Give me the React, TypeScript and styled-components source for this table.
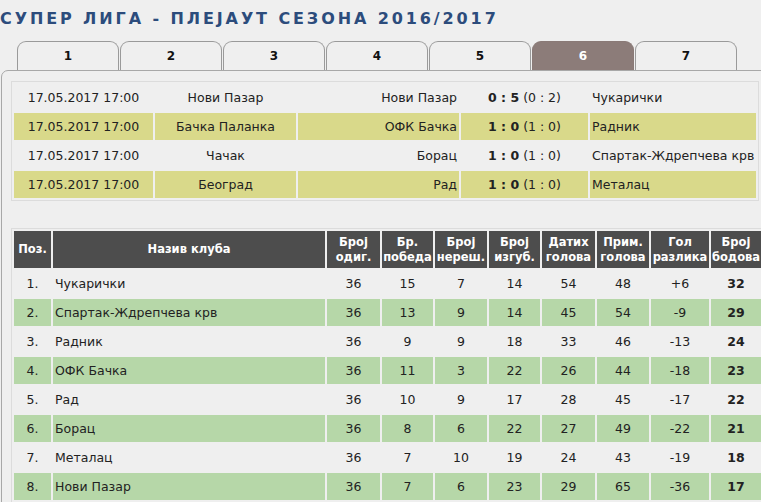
import React from "react";
import styled, { createGlobalStyle } from "styled-components";

const Global = createGlobalStyle`
  html, body { margin: 0; padding: 0; background: #efefef; overflow: hidden; }
  body { font-family: "DejaVu Sans", Tahoma, sans-serif; color: #222; }
`;

const Page = styled.div`
  width: 790px;
  padding-top: 8px;
`;

const Title = styled.h1`
  margin: 0;
  font-size: 16px;
  line-height: 21px;
  font-weight: bold;
  letter-spacing: 2.9px;
  color: #2c4c7c;
  white-space: nowrap;
`;

const TabBar = styled.div`
  display: flex;
  gap: 1px;
  padding-left: 17px;
  margin-top: 12px;
`;

const Tab = styled.div<{ $active?: boolean }>`
  box-sizing: border-box;
  width: 102px;
  height: 29px;
  border: 1px solid ${(p) => (p.$active ? "#8a7a77" : "#9a9a9a")};
  border-bottom: none;
  border-radius: 9px 9px 0 0;
  background: ${(p) => (p.$active ? "#8c7c79" : "#efefef")};
  color: ${(p) => (p.$active ? "#fff" : "#111")};
  font-weight: bold;
  font-size: 12px;
  display: flex;
  align-items: center;
  justify-content: center;
`;

const Panel = styled.div`
  border: 1px solid #a8a8a8;
  border-radius: 7px 0 0 0;
  margin-left: 1px;
  padding: 10px 0 0 9px;
  height: 500px;
`;

const MatchTable = styled.table`
  border-collapse: separate;
  border-spacing: 2px;
  border: 1px solid #dcdcdc;
  font-size: 12.5px;
  table-layout: fixed;
`;

const MatchRow = styled.tr<{ $alt?: boolean }>`
  td {
    background: ${(p) => (p.$alt ? "#d9d98a" : "transparent")};
  }
`;

const MCell = styled.td<{ $align?: string; $w: number }>`
  width: ${(p) => p.$w}px;
  height: 27px;
  padding: 0 2px;
  box-sizing: border-box;
  text-align: ${(p) => p.$align || "center"};
  white-space: nowrap;
  color: #222;
`;

const Score = styled.span`
  font-weight: bold;
`;

const Standings = styled.table`
  margin-top: 27px;
  border-collapse: separate;
  border-spacing: 2px;
  border: 1px solid #dcdcdc;
  table-layout: fixed;
  font-size: 12.5px;
`;

const Th = styled.th<{ $w: number }>`
  width: ${(p) => p.$w}px;
  height: 37px;
  background: #4d4d4d;
  color: #fff;
  font-size: 11.5px;
  font-weight: bold;
  line-height: 15px;
  padding: 0;
  text-align: center;
  white-space: nowrap;
`;

const SRow = styled.tr<{ $alt?: boolean }>`
  td {
    background: ${(p) => (p.$alt ? "#b6d7a8" : "transparent")};
  }
`;

const Td = styled.td<{ $align?: string; $bold?: boolean }>`
  height: 27px;
  padding: 0 2px;
  text-align: ${(p) => p.$align || "center"};
  font-weight: ${(p) => (p.$bold ? "bold" : "normal")};
  color: #222;
  white-space: nowrap;
`;

const matches = [
  ["17.05.2017 17:00", "Нови Пазар", "Нови Пазар", "0 : 5", "(0 : 2)", "Чукарички"],
  ["17.05.2017 17:00", "Бачка Паланка", "ОФК Бачка", "1 : 0", "(1 : 0)", "Радник"],
  ["17.05.2017 17:00", "Чачак", "Борац", "1 : 0", "(1 : 0)", "Спартак-Ждрепчева крв"],
  ["17.05.2017 17:00", "Београд", "Рад", "1 : 0", "(1 : 0)", "Металац"],
];

const table = [
  ["1.", "Чукарички", 36, 15, 7, 14, 54, 48, "+6", 32],
  ["2.", "Спартак-Ждрепчева крв", 36, 13, 9, 14, 45, 54, "-9", 29],
  ["3.", "Радник", 36, 9, 9, 18, 33, 46, "-13", 24],
  ["4.", "ОФК Бачка", 36, 11, 3, 22, 26, 44, "-18", 23],
  ["5.", "Рад", 36, 10, 9, 17, 28, 45, "-17", 22],
  ["6.", "Борац", 36, 8, 6, 22, 27, 49, "-22", 21],
  ["7.", "Металац", 36, 7, 10, 19, 24, 43, "-19", 18],
  ["8.", "Нови Пазар", 36, 7, 6, 23, 29, 65, "-36", 17],
];

const headers: [string, number][] = [
  ["Поз.", 37],
  ["Назив клуба", 272],
  ["Број\nодиг.", 53],
  ["Бр.\nпобеда", 51],
  ["Број\nнереш.", 52],
  ["Број\nизгуб.", 51],
  ["Датих\nголова", 53],
  ["Прим.\nголова", 52],
  ["Гол\nразлика", 58],
  ["Број\nбодова", 50],
];

export default function App() {
  return (
    <Page>
      <Global />
      <Title>СУПЕР ЛИГА - ПЛЕЈАУТ СЕЗОНА 2016/2017</Title>
      <TabBar>
        {[1, 2, 3, 4, 5, 6, 7].map((n) => (
          <Tab key={n} $active={n === 6}>
            {n}
          </Tab>
        ))}
      </TabBar>
      <Panel>
        <MatchTable>
          <tbody>
            {matches.map((m, i) => (
              <MatchRow key={i} $alt={i % 2 === 1}>
                <MCell $w={139}>{m[0]}</MCell>
                <MCell $w={141}>{m[1]}</MCell>
                <MCell $w={161} $align="right">{m[2]}</MCell>
                <MCell $w={127}>
                  <Score>{m[3]}</Score> {m[4]}
                </MCell>
                <MCell $w={163} $align="left">{m[5]}</MCell>
              </MatchRow>
            ))}
          </tbody>
        </MatchTable>
        <Standings>
          <thead>
            <tr>
              {headers.map(([h, w]) => (
                <Th key={h} $w={w}>
                  {h.split("\n").map((l, i) => (
                    <React.Fragment key={i}>
                      {i > 0 && <br />}
                      {l}
                    </React.Fragment>
                  ))}
                </Th>
              ))}
            </tr>
          </thead>
          <tbody>
            {table.map((r, i) => (
              <SRow key={i} $alt={i % 2 === 1}>
                {r.map((c, j) => (
                  <Td key={j} $align={j === 1 ? "left" : "center"} $bold={j === 9}>
                    {c}
                  </Td>
                ))}
              </SRow>
            ))}
          </tbody>
        </Standings>
      </Panel>
    </Page>
  );
}
